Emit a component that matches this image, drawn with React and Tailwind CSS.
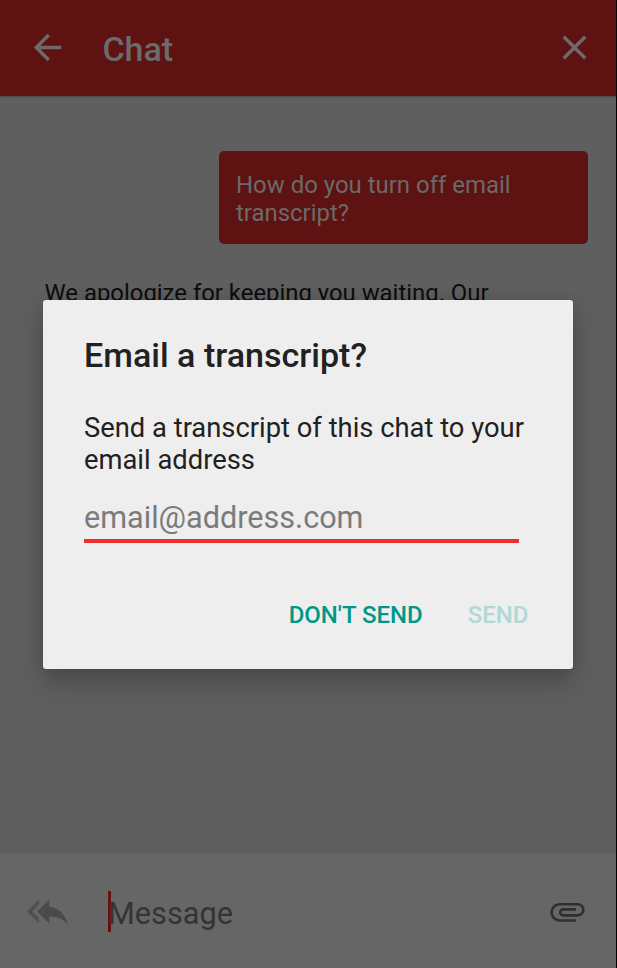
function Icon({ d, className = "", children }) {
  return (
    <svg viewBox="0 0 24 24" fill="currentColor" className={`size-[41px] shrink-0 ${className}`} aria-hidden="true">
      {children}
      <path d={d} />
    </svg>
  );
}

const ICONS = {
  back: "M20 11H7.83l5.59-5.59L12 4l-8 8 8 8 1.41-1.41L7.83 13H20v-2z",
  close: "M19 6.41L17.59 5 12 10.59 6.41 5 5 6.41 10.59 12 5 17.59 6.41 19 12 13.41 17.59 19 19 17.59 13.41 12z",
  replyChevron: "M7 8V5l-7 7 7 7v-3l-4-4 4-4z",
  replyArrow: "M13 9V5l-7 7 7 7v-4.1c5 0 8.5 1.6 11 5.1-1-5-4-10-11-11z",
  attachment:
    "M7.5 18C4.46 18 2 15.54 2 12.5S4.46 7 7.5 7H18c2.21 0 4 1.79 4 4s-1.79 4-4 4H9.5C8.12 15 7 13.88 7 12.5S8.12 10 9.5 10H17v1.5H9.5c-.55 0-1 .45-1 1s.45 1 1 1H18c1.38 0 2.5-1.12 2.5-2.5S19.38 8.5 18 8.5H7.5c-2.21 0-4 1.79-4 4s1.79 4 4 4H17V18H7.5z",
};

function ChatScreen() {
  return (
    <div className="flex h-full flex-col border-r border-black">
      <header className="z-10 flex h-[95px] items-center bg-[#5e1212] pr-[21px] pl-[27.4px] text-[#6b6b6b] shadow-[0_1px_1px_rgba(50,20,20,0.7),0_1px_3px_rgba(0,0,0,0.3)]">
        <Icon d={ICONS.back} />
        <h1 className="ml-[34px] flex-1 pt-0.5 text-[34px] leading-10 font-medium">Chat</h1>
        <Icon d={ICONS.close} />
      </header>
      <main className="flex flex-1 flex-col bg-[#5f5f5f] pt-[55.5px]">
        <div className="mr-7 h-[93.5px] w-[369px] self-end rounded-[5px] bg-[#5e1212] px-[17px] pt-[20.5px] text-[23.95px] leading-7 text-[#6a6a6a]">
          How do you turn off email
          <br />
          transcript?
        </div>
        <p className="mt-[35px] ml-[44.5px] text-[23.9px] leading-7 whitespace-nowrap text-[#0d0d0d]">
          We apologize for keeping you waiting. Our
        </p>
      </main>
      <footer className="flex h-[114px] items-center bg-[#666666] pr-[28px] pl-[27.4px]">
        <Icon d={ICONS.replyArrow} className="text-[#4a4a4a]">
          <path d={ICONS.replyChevron} className="text-[#505050]" fill="currentColor" />
        </Icon>
        <div className="ml-[39.6px] flex h-[41px] flex-1 items-center border-l-3 border-[#6b0f0f]">
          <span className="-ml-[3px] pt-[5px] text-[30.7px] leading-9 text-[#343434]">Message</span>
        </div>
        <Icon d={ICONS.attachment} className="text-[#2f2f2f]" />
      </footer>
    </div>
  );
}

function TranscriptDialog() {
  return (
    <section
      role="dialog"
      className="absolute top-[300px] left-[43px] flex h-[368.5px] w-[530px] flex-col rounded-[3px] bg-[#eeeeee] px-[41px] pt-[35px] shadow-[0_14px_26px_rgba(0,0,0,0.22),0_0_14px_rgba(0,0,0,0.1)]"
    >
      <h2 className="text-[34.05px] leading-10 font-medium text-[#212121]">Email a transcript?</h2>
      <p className="mt-[37px] text-[27.35px] leading-8 whitespace-nowrap text-[#212121]">
        Send a transcript of this chat to your
        <br />
        email address
      </p>
      <div className="mt-[24px] h-[43px] w-[434.5px] border-b-4 border-[#ee2e2e] text-[30.6px] leading-9 text-[#7b7b7b]">
        email@address.com
      </div>
      <div className="mt-14 -mr-9 flex justify-end gap-[45px] pr-[39.5px] text-2xl leading-8 font-medium">
        <span className="text-[#009788]">DON'T SEND</span>
        <span className="text-[#b0d8d4]">SEND</span>
      </div>
    </section>
  );
}

export default function App() {
  return (
    <div className="relative h-[968px] w-[617px] overflow-hidden font-[Roboto,sans-serif]">
      <ChatScreen />
      <TranscriptDialog />
    </div>
  );
}
